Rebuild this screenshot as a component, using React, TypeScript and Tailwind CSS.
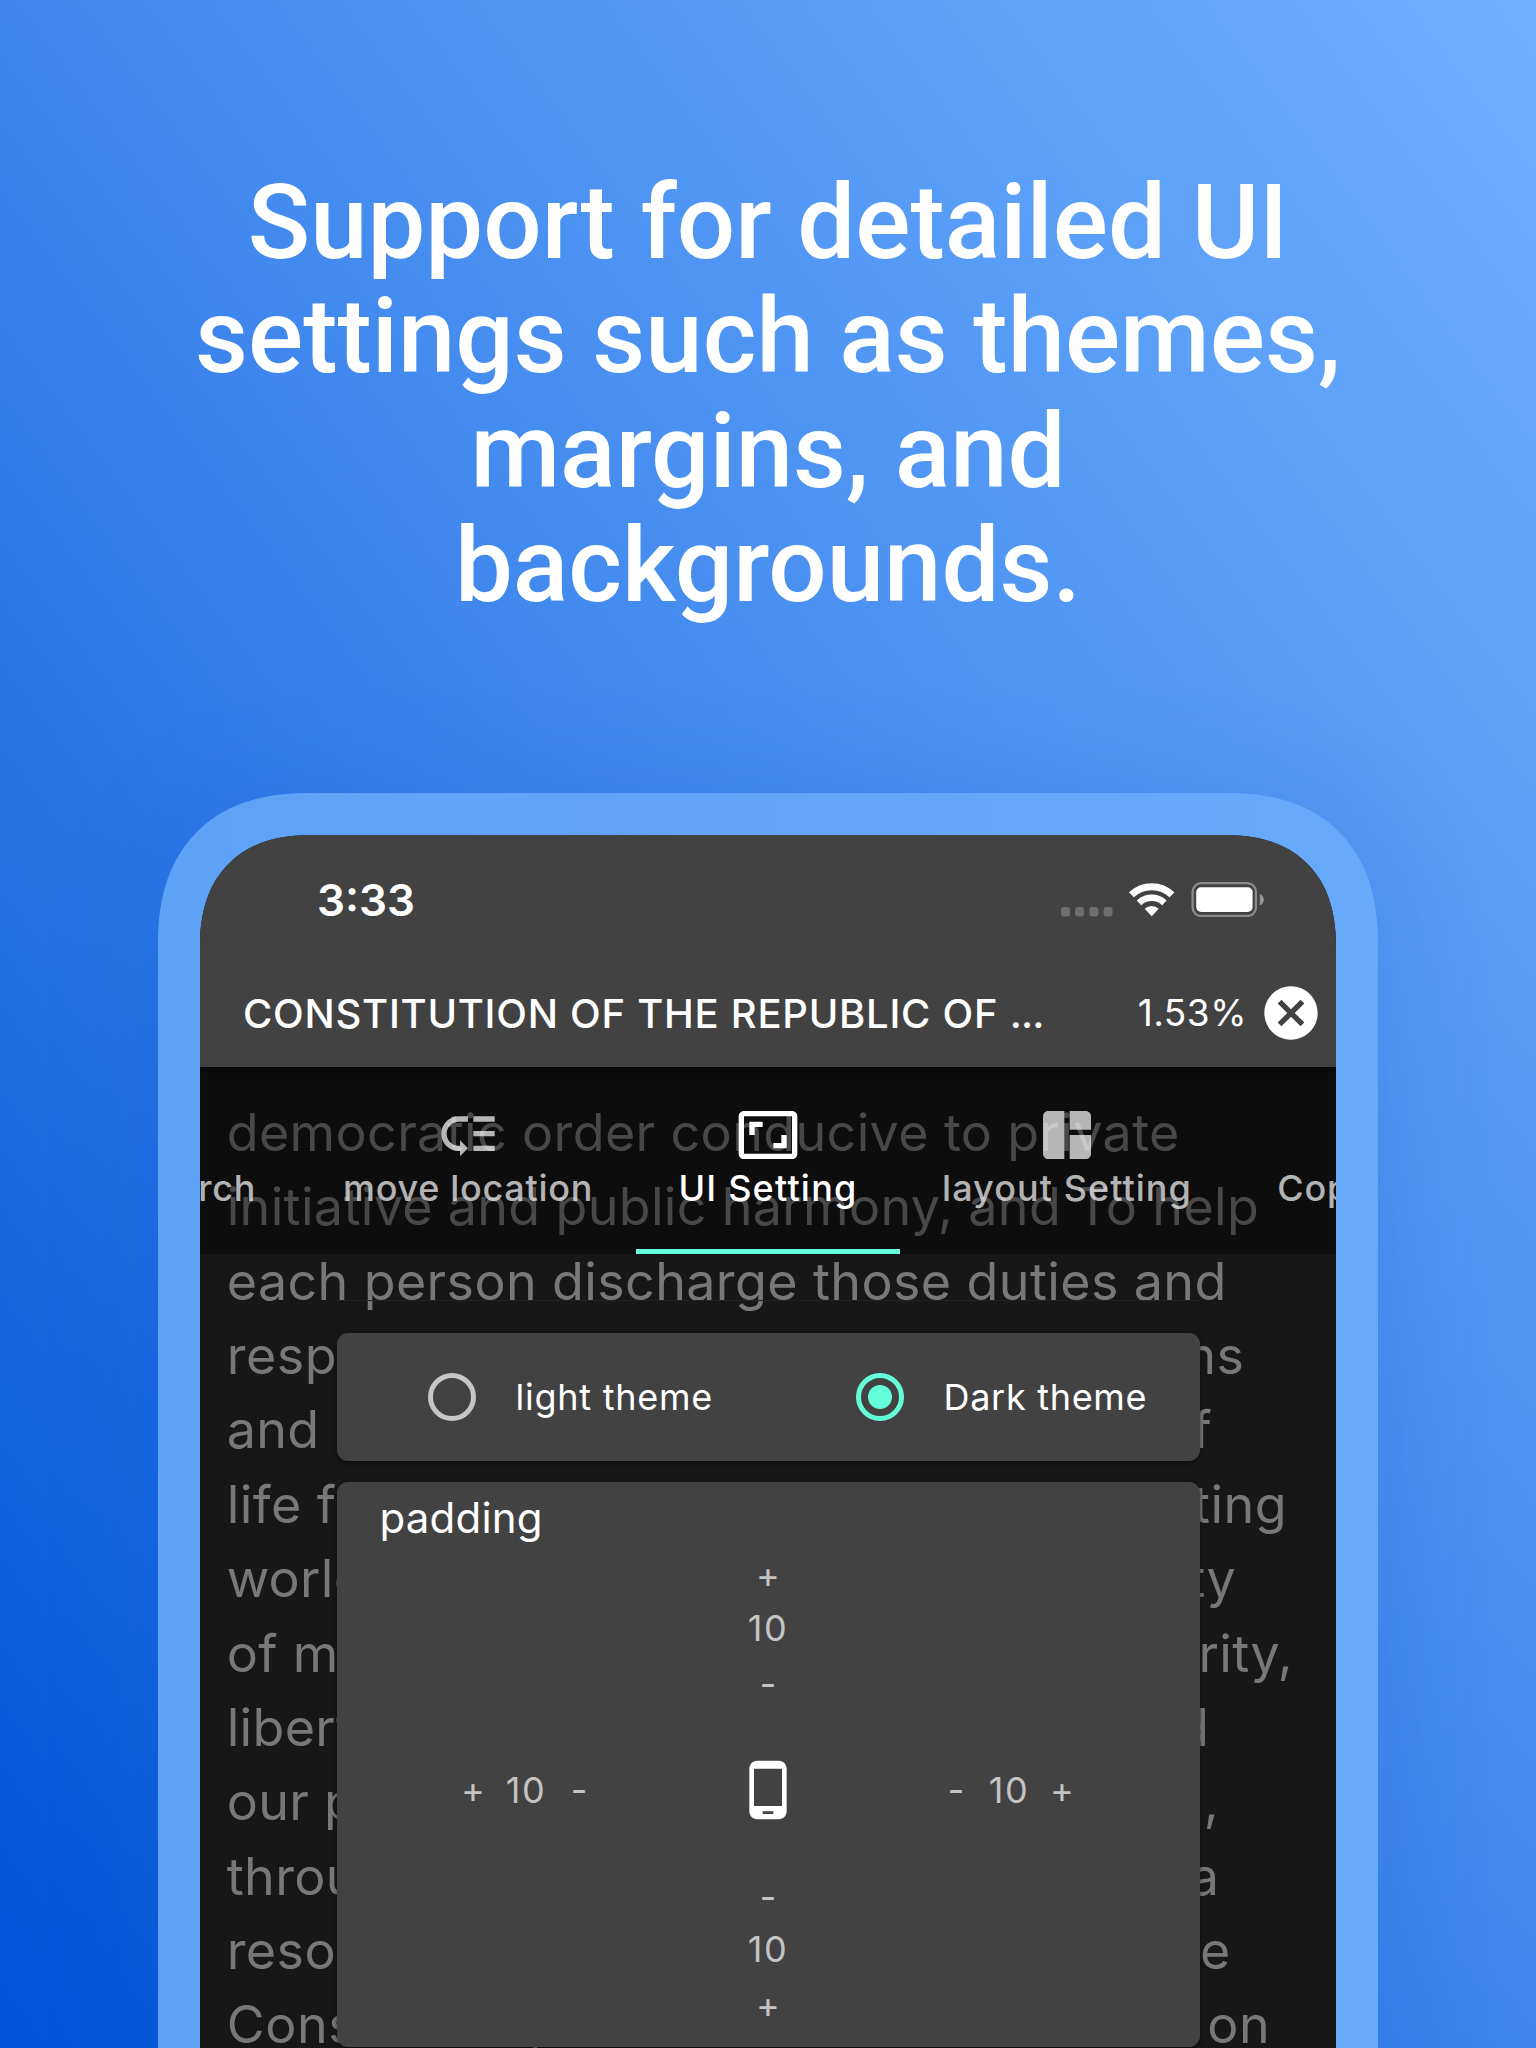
import React from "react";
import {
  MdAspectRatio,
  MdCancel,
  MdLowPriority,
  MdPhoneAndroid,
  MdSpaceDashboard,
} from "react-icons/md";

const headline = ["Support for detailed UI", "settings such as themes,", "margins, and", "backgrounds."];

const bookLines: { text: string; tracking: string }[] = [
  { text: "democratic order conducive to private", tracking: "tracking-[0.37px]" },
  { text: "initiative and public harmony, and To help", tracking: "tracking-[0.33px]" },
  { text: "each person discharge those duties and", tracking: "tracking-[0.38px]" },
  { text: "responsibilities concomitant to freedoms", tracking: "tracking-[0.49px]" },
  { text: "and rights, and To elevate the quality of", tracking: "tracking-[0.35px]" },
  { text: "life for all citizens and contribute to lasting", tracking: "tracking-[0.46px]" },
  { text: "world peace and the common prosperity", tracking: "tracking-[0.31px]" },
  { text: "of mankind and thereby to ensure security,", tracking: "tracking-[0.31px]" },
  { text: "liberty and happiness for ourselves and", tracking: "tracking-[0.31px]" },
  { text: "our posterity forever, Do hereby amend,", tracking: "tracking-[0.31px]" },
  { text: "through national referendum following a", tracking: "tracking-[0.35px]" },
  { text: "resolution by the National Assembly, the", tracking: "tracking-[0.43px]" },
  { text: "Constitution, ordained and established on", tracking: "tracking-[0.54px]" },
];

function StatusIcons() {
  return (
    <svg width="203" height="35" viewBox="0 0 203 35" fill="none">
      <g fill="#6f6f6f">
        <rect x="0" y="25" width="9" height="9.4" rx="3" />
        <rect x="14.2" y="25" width="9" height="9.4" rx="3" />
        <rect x="28.4" y="25" width="9" height="9.4" rx="3" />
        <rect x="42.6" y="25" width="9" height="9.4" rx="3" />
      </g>
      <path d="M70.4 12.8A29.5 29.5 0 0 1 111 12.8" stroke="#fff" strokeWidth="7" />
      <path d="M78 20.9A18.4 18.4 0 0 1 103.4 20.9" stroke="#fff" strokeWidth="6.4" />
      <path d="M90.7 34.2L83.7 26.8A10.2 10.2 0 0 1 97.7 26.8Z" fill="#fff" />
      <rect x="131.6" y="1.2" width="63.4" height="32.8" rx="8.6" stroke="#8b8b8b" strokeWidth="2.3" />
      <rect x="135.2" y="5.2" width="56.4" height="24.8" rx="5" fill="#fff" />
      <path d="M198.8 12c2.5 1 4 3.2 4 5.7s-1.5 4.7-4 5.7z" fill="#979797" />
    </svg>
  );
}

function Header() {
  return (
    <header className="relative z-10 h-[232px] bg-[#424242] text-white shadow-[0_3px_8px_rgba(0,0,0,0.45)]">
      <div className="flex h-[129px] items-center justify-between pl-[117px] pr-[72px]">
        <span className="text-[44px] font-semibold leading-[52px]">3:33</span>
        <StatusIcons />
      </div>
      <div className="flex h-[98px] items-center pl-[43px] pr-[13px]">
        <h2 className="flex-1 whitespace-nowrap pt-[2px] text-[40px] font-medium tracking-[0.74px]">
          CONSTITUTION OF THE REPUBLIC OF <span className="tracking-[-0.8px]">...</span>
        </h2>
        <span className="mr-[12px] text-[37px] tracking-[0.5px]">1.53%</span>
        <MdCancel size={64} />
      </div>
    </header>
  );
}

function Tab({ icon, label, className }: { icon?: React.ReactNode; label: string; className: string }) {
  return (
    <div className={`flex h-full shrink-0 flex-col items-center whitespace-nowrap pt-[36px] text-[36px] font-medium ${className}`}>
      <div className="h-[64px]">{icon}</div>
      <span className="mt-[-1px] leading-[44px]">{label}</span>
    </div>
  );
}

function Tabs() {
  return (
    <nav className="h-[187px] overflow-hidden bg-black/40">
      <div className="ml-[-200px] flex h-full">
        <Tab label="text search" className="w-[300px] pl-[12px] tracking-[0.8px] text-white/70" />
        <Tab icon={<MdLowPriority size={64} />} label="move location" className="w-[336px] tracking-[0.7px] text-white/70" />
        <Tab
          icon={<MdAspectRatio size={64} />}
          label="UI Setting"
          className="w-[264px] border-b-[5px] border-[#64ffda] tracking-[1.2px] text-white"
        />
        <Tab icon={<MdSpaceDashboard size={64} />} label="layout Setting" className="w-[334px] tracking-[1.05px] text-white/70" />
        <Tab label="Copy" className="w-[180px] tracking-[0.8px] text-white/70" />
      </div>
    </nav>
  );
}

function Radio({ checked, label, className }: { checked?: boolean; label: string; className: string }) {
  return (
    <label className={`flex items-center gap-[40px] whitespace-nowrap text-[36px] text-white ${className}`}>
      <span
        className={`flex size-[48px] items-center justify-center rounded-full border-[5.4px] ${
          checked ? "border-[#64ffda]" : "border-[#c6c6c6]"
        }`}
      >
        {checked && <span className="size-[24px] rounded-full bg-[#64ffda]" />}
      </span>
      {label}
    </label>
  );
}

function Stepper({ signs }: { signs: [string, string] }) {
  return (
    <div className="grid w-[159px] grid-cols-3 text-center leading-[44px]">
      <span>{signs[0]}</span>
      <span className="tracking-[1.5px]">10</span>
      <span>{signs[1]}</span>
    </div>
  );
}

function PaddingCard() {
  return (
    <section className="mt-[21px] h-[565px] rounded-[11px] bg-[#424242] text-[36px] text-[#c4c4c4] shadow-[0_2px_4px_rgba(0,0,0,0.5)]">
      <h3 className="h-[68px] pl-[43px] text-[42px] leading-[72px] tracking-[0.2px] text-white">padding</h3>
      <div className="flex flex-col text-center">
        <span className="h-[53px] leading-[51px]">+</span>
        <span className="h-[51px] leading-[51px] tracking-[1.5px]">10</span>
        <span className="h-[60px] leading-[60px]">-</span>
        <div className="flex h-[152px] items-center pl-[110px]">
          <Stepper signs={["+", "-"]} />
          <div className="flex w-[324px] justify-center text-white">
            <MdPhoneAndroid size={64} />
          </div>
          <Stepper signs={["-", "+"]} />
        </div>
        <span className="h-[62px] leading-[62px]">-</span>
        <span className="h-[43px] leading-[43px] tracking-[1.5px]">10</span>
        <span className="h-[72px] leading-[68px]">+</span>
      </div>
    </section>
  );
}

export default function App() {
  return (
    <main className="flex h-[2048px] w-[1536px] flex-col items-center overflow-hidden bg-[linear-gradient(to_top_right,#0052d8,#3f87ed_50%,#6eb0ff)] pt-[166px]">
      <h1 className="relative z-10 h-[627px] shrink-0 text-center font-['Roboto',sans-serif] text-[103px] font-medium leading-[114.3px] text-white">
        {headline.map((line) => (
          <span key={line} className="block whitespace-nowrap">
            {line}
          </span>
        ))}
      </h1>
      <div className="h-[1600px] w-[1220px] shrink-0 rounded-[152px] bg-[linear-gradient(to_right,#5ea2f6,#68aafa)] px-[42px] pt-[42px] shadow-[0_10px_110px_rgba(20,90,200,0.22)] [corner-shape:superellipse(1.23)]">
        <div className="h-[1500px] overflow-hidden rounded-[112px] bg-[#171717] font-['Inter',sans-serif] [corner-shape:superellipse(1.23)]">
          <Header />
          <div className="relative">
            <article className="whitespace-nowrap pl-[26.7px] pt-[29px] text-[52px] leading-[74.36px] text-[#787878]">
              {bookLines.map((line) => (
                <p key={line.text} className={line.tracking}>
                  {line.text}
                </p>
              ))}
            </article>
            <div className="absolute inset-x-0 top-0">
              <Tabs />
              <div className="mx-auto w-[863px]">
                <div className="mt-[46px] h-px bg-[#232323]" />
                <section className="mt-[32px] flex h-[128px] items-center rounded-[11px] bg-[#424242] shadow-[0_2px_4px_rgba(0,0,0,0.5)]">
                  <Radio label="light theme" className="w-[519px] pl-[91px] tracking-[0.75px]" />
                  <Radio checked label="Dark theme" className="tracking-[0.7px]" />
                </section>
                <PaddingCard />
              </div>
            </div>
          </div>
        </div>
      </div>
    </main>
  );
}
